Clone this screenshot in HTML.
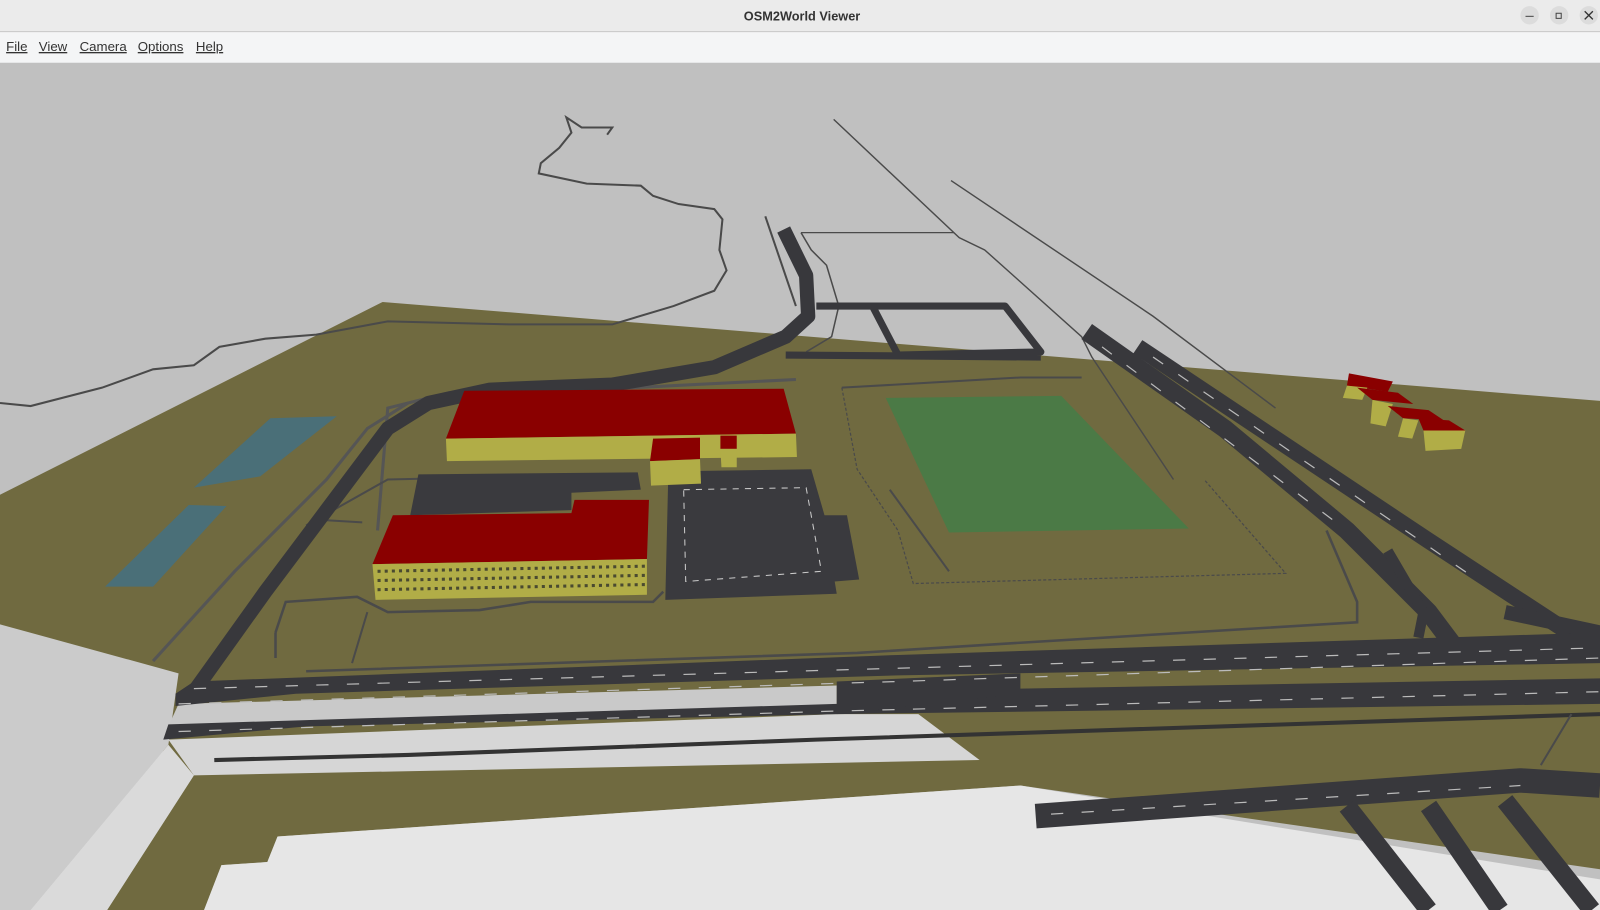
<!DOCTYPE html>
<html><head><meta charset="utf-8"><style>
html,body{margin:0;padding:0;width:1600px;height:910px;overflow:hidden;background:#c0c0c0}
svg{display:block}
</style></head><body>
<svg width="1600" height="910" viewBox="0 0 1568 892" preserveAspectRatio="none" xmlns="http://www.w3.org/2000/svg" font-family="Liberation Sans, sans-serif">
<rect x="0" y="61" width="1568" height="831" fill="#c0c0c0"/>
<polygon points="375,296 1568,393 1568,852 1000,770 272,820 262,845 217,848 200,892 105,892 190,760 0,612 0,485" fill="#706a40"/>
<polygon points="0,612 175,660 165,730 30,892 0,892" fill="#cbcbcb"/>
<polygon points="165,730 190,760 105,892 30,892" fill="#dadada"/>
<polygon points="175,690 820,672 820,700 165,712" fill="#c9c9c9"/>
<polygon points="165,725 820,700 900,700 960,745 190,760" fill="#d6d6d6"/>
<polygon points="272,820 1000,770 1568,862 1568,892 200,892 217,848 262,845" fill="#e6e6e6"/>
<polygon points="265,410 330,408 255,467 190,478" fill="#4a6f78"/>
<polygon points="185,495 222,496 150,575 103,575" fill="#4a6f78"/>
<polygon points="868,390 1040,388 1165,518 930,522" fill="#4b7a46"/>
<g fill="none" stroke="#4a4a4a" stroke-width="2">
<path d="M0,395 L30,398 L100,380 L150,362 L190,358 L215,340 L260,332 L310,328 L380,315 L500,318 L600,318 L660,300 L700,285 L712,265 L705,245 L708,215 L700,205 L665,200 L640,192 L628,182 L575,180 L528,170 L530,160 L548,145 L560,130 L555,115 L570,125 L600,125 L595,132"/>
<path d="M817,117 L940,233 L965,245 L1060,330 L1070,350 L1150,470" stroke-width="1.4"/>
<path d="M932,177 L1130,310 L1250,400" stroke-width="1.4"/>
<path d="M785,228 L935,228" stroke-width="1.2"/>
<path d="M785,228 L795,245 L810,260 L822,300 L815,330 L790,345" stroke-width="1.5"/>
<path d="M750,212 L780,300"/>
<path d="M370,520 L380,400 L440,385 L620,380 L780,372" stroke="#555" stroke-width="3"/>
<path d="M150,648 L230,560 L320,470 L360,420 L400,395" stroke="#555" stroke-width="3"/>
<path d="M825,380 L840,460 L880,520 L895,572 L1260,562 L1180,470" stroke-width="1.2" stroke-dasharray="3,2"/>
<path d="M825,380 L1000,370 L1060,370" stroke-width="2"/>
<path d="M872,480 L930,560"/>
<path d="M270,620 L280,590 L350,585 L380,600 L470,598 L520,590 L640,590 L650,580" stroke-width="2.5"/>
<path d="M270,645 L270,620 M300,658 L840,640 L1000,630 L1330,610 L1330,590 L1300,520" stroke-width="2.5"/>
<path d="M345,650 L360,600 M320,510 L355,512 M300,515 L380,470 L600,465"/>
<path d="M210,745 L400,740 L800,725 L1568,700" stroke="#333" stroke-width="4"/>
<path d="M1510,750 L1540,700"/>
</g>
<g fill="none" stroke="#38383c" stroke-linejoin="round">
<path d="M768,225 L790,270 L792,310 L770,330 L700,360 L600,377 L480,382 L420,395 L380,420 L320,500 L260,580 L210,650 L185,685" stroke-width="14"/>
<path d="M800,300 L985,300 L1020,345 L880,348 L855,300 M770,348 L1020,350" stroke-width="7"/>
<path d="M1065,325 L1200,420 L1320,520 L1400,600 L1430,640" stroke-width="18"/>
<path d="M1115,340 L1250,430 L1400,530 L1568,640" stroke-width="16"/>
<path d="M1360,540 L1395,600 L1390,625" stroke-width="10"/>
<path d="M1475,600 L1568,620" stroke-width="14"/>
<path d="M1015,800 L1490,765 L1568,770" stroke-width="24"/>
<path d="M1320,790 L1400,892 M1400,790 L1470,892 M1475,785 L1560,892" stroke-width="18"/>
</g>
<polygon points="172,680 190,668 880,642 1568,620 1568,650 880,662 290,680 172,692" fill="#38383c"/>
<polygon points="165,710 820,690 1000,675 1568,665 1568,690 820,700 300,712 160,725" fill="#38383c"/>
<polygon points="820,668 1000,660 1000,680 820,700" fill="#38383c"/>
<g stroke="#bbb" stroke-width="1.2" stroke-dasharray="12,18" fill="none">
<path d="M190,675 L880,655 L1568,635"/><path d="M175,690 L880,668 L1568,645"/>
<path d="M175,717 L820,697 L1568,678"/><path d="M1030,798 L1490,770"/>
<path d="M1080,340 L1320,520"/><path d="M1130,350 L1450,570"/>
</g>
<polygon points="410,465 625,463 628,480 560,483 560,500 402,505" fill="#3a3a3e"/>
<polygon points="655,462 795,460 808,505 830,505 842,568 818,570 820,582 652,588" fill="#3a3a3e"/>
<g stroke="#ccc" stroke-width="1" stroke-dasharray="6,6" fill="none"><path d="M670,480 L790,478 L805,560 L672,570 Z"/></g>
<polygon points="455,383 768,381 780,425 437,430" fill="#8a0000"/>
<polygon points="437,430 780,425 781,448 438,452" fill="#b1ad47"/>
<polygon points="640,430 686,429 686,450 637,452" fill="#8a0000"/>
<polygon points="637,452 686,450 687,474 638,476" fill="#b1ad47"/>
<polygon points="706,427 722,427 722,440 706,440" fill="#8a0000"/>
<polygon points="706,440 722,440 722,458 707,458" fill="#b1ad47"/>
<polygon points="385,505 560,503 563,490 636,490 634,548 365,553" fill="#8a0000"/>
<polygon points="365,553 634,548 634,583 368,588" fill="#b1ad47"/>
<g stroke="#4a4a30" stroke-width="3" stroke-dasharray="3,4">
<path d="M370,560 L632,555"/><path d="M370,569 L632,564"/><path d="M370,578 L632,573"/>
</g>
<polygon points="1322,366 1365,374 1360,384 1320,378" fill="#8a0000"/>
<polygon points="1320,378 1340,380 1335,392 1316,390" fill="#b1ad47"/>
<polygon points="1330,380 1370,385 1385,396 1345,392" fill="#8a0000"/>
<polygon points="1345,392 1365,396 1358,418 1343,415" fill="#b1ad47"/>
<polygon points="1360,398 1400,402 1415,412 1375,410" fill="#8a0000"/>
<polygon points="1375,410 1390,412 1384,430 1370,428" fill="#b1ad47"/>
<polygon points="1390,410 1420,412 1436,422 1395,422" fill="#8a0000"/>
<polygon points="1395,422 1436,422 1432,440 1397,442" fill="#b1ad47"/>
<rect x="0" y="0" width="1568" height="31" fill="#ebebeb"/>
<rect x="0" y="30.5" width="1568" height="1" fill="#c8c8c8"/>
<text x="786" y="20" text-anchor="middle" font-size="12.5" font-weight="bold" fill="#333">OSM2World Viewer</text>
<circle cx="1499" cy="15" r="9" fill="#dcdcdc"/><path d="M1495,16 L1503,16" stroke="#444" stroke-width="1"/>
<circle cx="1528" cy="15" r="9" fill="#dcdcdc"/><rect x="1525" y="13" width="5" height="5" fill="none" stroke="#444" stroke-width="1"/>
<circle cx="1557" cy="15" r="9" fill="#dcdcdc"/><path d="M1553,11 L1561,19 M1561,11 L1553,19" stroke="#333" stroke-width="1.3"/>
<rect x="0" y="31.5" width="1568" height="30" fill="#f4f5f6"/>
<g font-size="13" fill="#333" text-decoration="underline">
<text x="6" y="50">File</text><text x="38" y="50">View</text><text x="78" y="50">Camera</text><text x="135" y="50">Options</text><text x="192" y="50">Help</text>
</g>
</svg>
</body></html>
